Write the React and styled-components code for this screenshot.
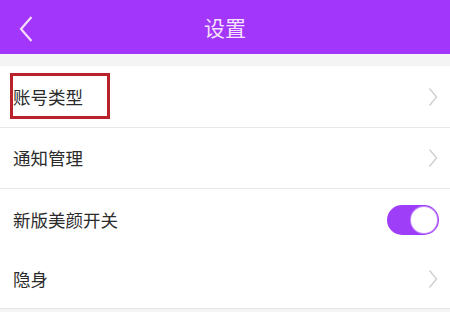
import React from "react";
import styled, { createGlobalStyle } from "styled-components";

const Global = createGlobalStyle`
  html, body { margin: 0; padding: 0; background: #f4f4f4; }
  body { font-family: "Noto Sans CJK SC", "Noto Sans", sans-serif; }
`;

const Page = styled.div`
  width: 450px;
  height: 312px;
  background: #f4f4f4;
  overflow: hidden;
`;

const Header = styled.header`
  height: 54px;
  background: #a336fb;
  display: flex;
  align-items: center;
  justify-content: center;
  position: relative;
`;

const Back = styled.button`
  position: absolute;
  left: 14px;
  top: 13px;
  width: 24px;
  height: 32px;
  border: none;
  background: none;
  padding: 0;
  display: flex;
  align-items: center;
  justify-content: center;
`;

const Title = styled.h1`
  margin: 0;
  font-size: 21px;
  font-weight: 400;
  color: #f7e3fb;
  letter-spacing: 0;
`;

const List = styled.ul`
  list-style: none;
  margin: 12px 0 0;
  padding: 0;
  background: #fff;
  border-bottom: 1px solid #e6e6e6;
`;

const Row = styled.li`
  height: ${(p) => p.$h}px;
  display: flex;
  align-items: center;
  justify-content: space-between;
  padding: 0 12px 0 13px;
  border-bottom: ${(p) => (p.$line ? "1px solid #e8e8e8" : "none")};
  &:last-child { border-bottom: none; }
`;

const Label = styled.span`
  font-size: 17.5px;
  color: #2b2b2b;
  position: relative;
  line-height: 1;
`;

const Highlight = styled.span`
  position: absolute;
  left: -3px;
  top: -15px;
  width: 94px;
  height: 40px;
  border: 3px solid #b8232b;
`;

const Toggle = styled.span`
  width: 52px;
  height: 30px;
  border-radius: 15px;
  background: #9f3ef8;
  display: flex;
  align-items: center;
  justify-content: flex-end;
  padding: 0 2px;
  box-sizing: border-box;
  margin-right: -1px;
`;

const Knob = styled.span`
  width: 26px;
  height: 26px;
  border-radius: 50%;
  background: #fff;
  box-shadow: 0 0 0 1px #c58cfb;
`;

const Chevron = () => (
  <svg width="10" height="20" viewBox="0 0 10 20">
    <path d="M1.5 1.5 L8.5 10 L1.5 18.5" fill="none" stroke="#cfcfcf" strokeWidth="1.4" />
  </svg>
);

const rows = [
  { label: "账号类型", h: 61, line: true, hl: true },
  { label: "通知管理", h: 60, line: true },
  { label: "新版美颜开关", h: 61, line: false, toggle: true },
  { label: "隐身", h: 58, line: false },
];

export default function App() {
  return (
    <Page>
      <Global />
      <Header>
        <Back aria-label="返回">
          <svg width="14" height="28" viewBox="0 0 14 28">
            <path d="M12.5 2 L2 14 L12.5 26" fill="none" stroke="#f5dcfb" strokeWidth="2.2" />
          </svg>
        </Back>
        <Title>设置</Title>
      </Header>
      <List>
        {rows.map((r) => (
          <Row key={r.label} $h={r.h} $line={r.line}>
            <Label>
              {r.label}
              {r.hl && <Highlight />}
            </Label>
            {r.toggle ? (
              <Toggle>
                <Knob />
              </Toggle>
            ) : (
              <Chevron />
            )}
          </Row>
        ))}
      </List>
    </Page>
  );
}
